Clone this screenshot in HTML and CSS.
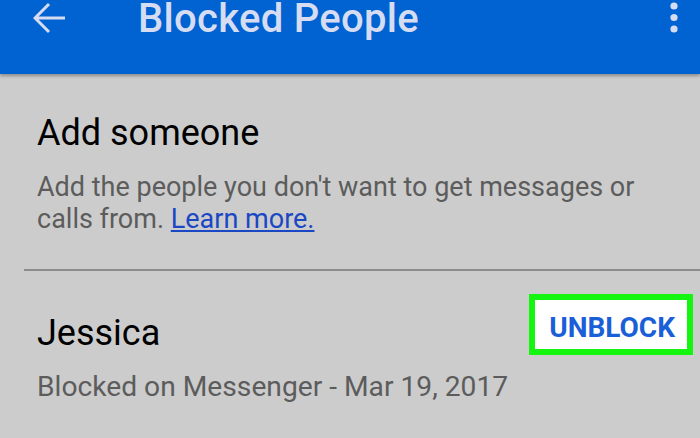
FILE: index.html
```html
<!DOCTYPE html>
<html lang="en">
<head>
	<meta charset="utf-8">
	<title>Blocked People</title>
	<link rel="stylesheet" href="styles.css">
</head>
<body>
	<div class="toolbar">
		<svg class="back" width="34" height="34" viewBox="0 0 34 34">
			<path d="M32 17H2M16 3L2 17L16 31" fill="none" stroke="#d6dcf2" stroke-width="3"/>
		</svg>
		<div class="title">Blocked People</div>
		<svg class="more" width="10" height="34" viewBox="0 0 10 34">
			<circle cx="5" cy="6" r="3.6" fill="#d6dcf2"/>
			<circle cx="5" cy="17.5" r="3.6" fill="#d6dcf2"/>
			<circle cx="5" cy="29" r="3.6" fill="#d6dcf2"/>
		</svg>
	</div>

	<div class="section add">
		<div class="heading">Add someone</div>
		<p class="desc">Add the people you don't want to get messages or calls from. <a href="#">Learn more.</a></p>
	</div>

	<div class="divider"></div>

	<div class="section person">
		<div class="person-info">
			<div class="heading">Jessica</div>
			<p class="desc date">Blocked on Messenger - Mar 19, 2017</p>
		</div>
		<div class="unblock">UNBLOCK</div>
	</div>
</body>
</html>
```

FILE: styles.css
```css
html {
	height: 100%;
}

body {
	margin: 0;
	padding: 0;
	background: #cccccc;
	font-family: Roboto, "Noto Sans", sans-serif;
	height: 100%;
	overflow: hidden;
}

.toolbar {
	height: 74px;
	background: #0063d1;
	box-shadow: 0 2px 3px rgba(0,0,0,0.3);
	display: flex;
	align-items: flex-start;
	padding: 0 21px 0 33px;
	box-sizing: border-box;
}

.back {
	margin-top: 1px;
}

.title {
	flex: 1;
	margin-left: 71px;
	margin-top: -4px;
	font-size: 40px;
	line-height: 46px;
	color: #d6dcf2;
	font-weight: 500;
	letter-spacing: 0.3px;
}

.section {
	padding-left: 37px;
}

.add {
	padding-top: 37px;
	padding-bottom: 34px;
}

.heading {
	font-size: 36px;
	line-height: 44px;
	color: #000;
}

.desc {
	margin: 16px 0 0;
	font-size: 27px;
	line-height: 32px;
	color: #5c5c5c;
	max-width: 620px;
}

.desc a {
	color: #1a47c4;
	text-decoration: underline;
}

.date {
	margin-top: 15px;
	font-size: 28.2px;
	line-height: 34px;
}

.divider {
	height: 2px;
	background: #8c8c8c;
	margin-left: 24px;
}

.person {
	display: flex;
	align-items: flex-start;
	justify-content: space-between;
	padding-top: 40px;
	padding-right: 7px;
}

.unblock {
	margin-top: -17px;
	background: #fff;
	border: 6px solid #14f50f;
	padding: 12px 12px 5px 14px;
	font-size: 28px;
	line-height: 32px;
	font-weight: bold;
	color: #1a5fd8;
}
```
